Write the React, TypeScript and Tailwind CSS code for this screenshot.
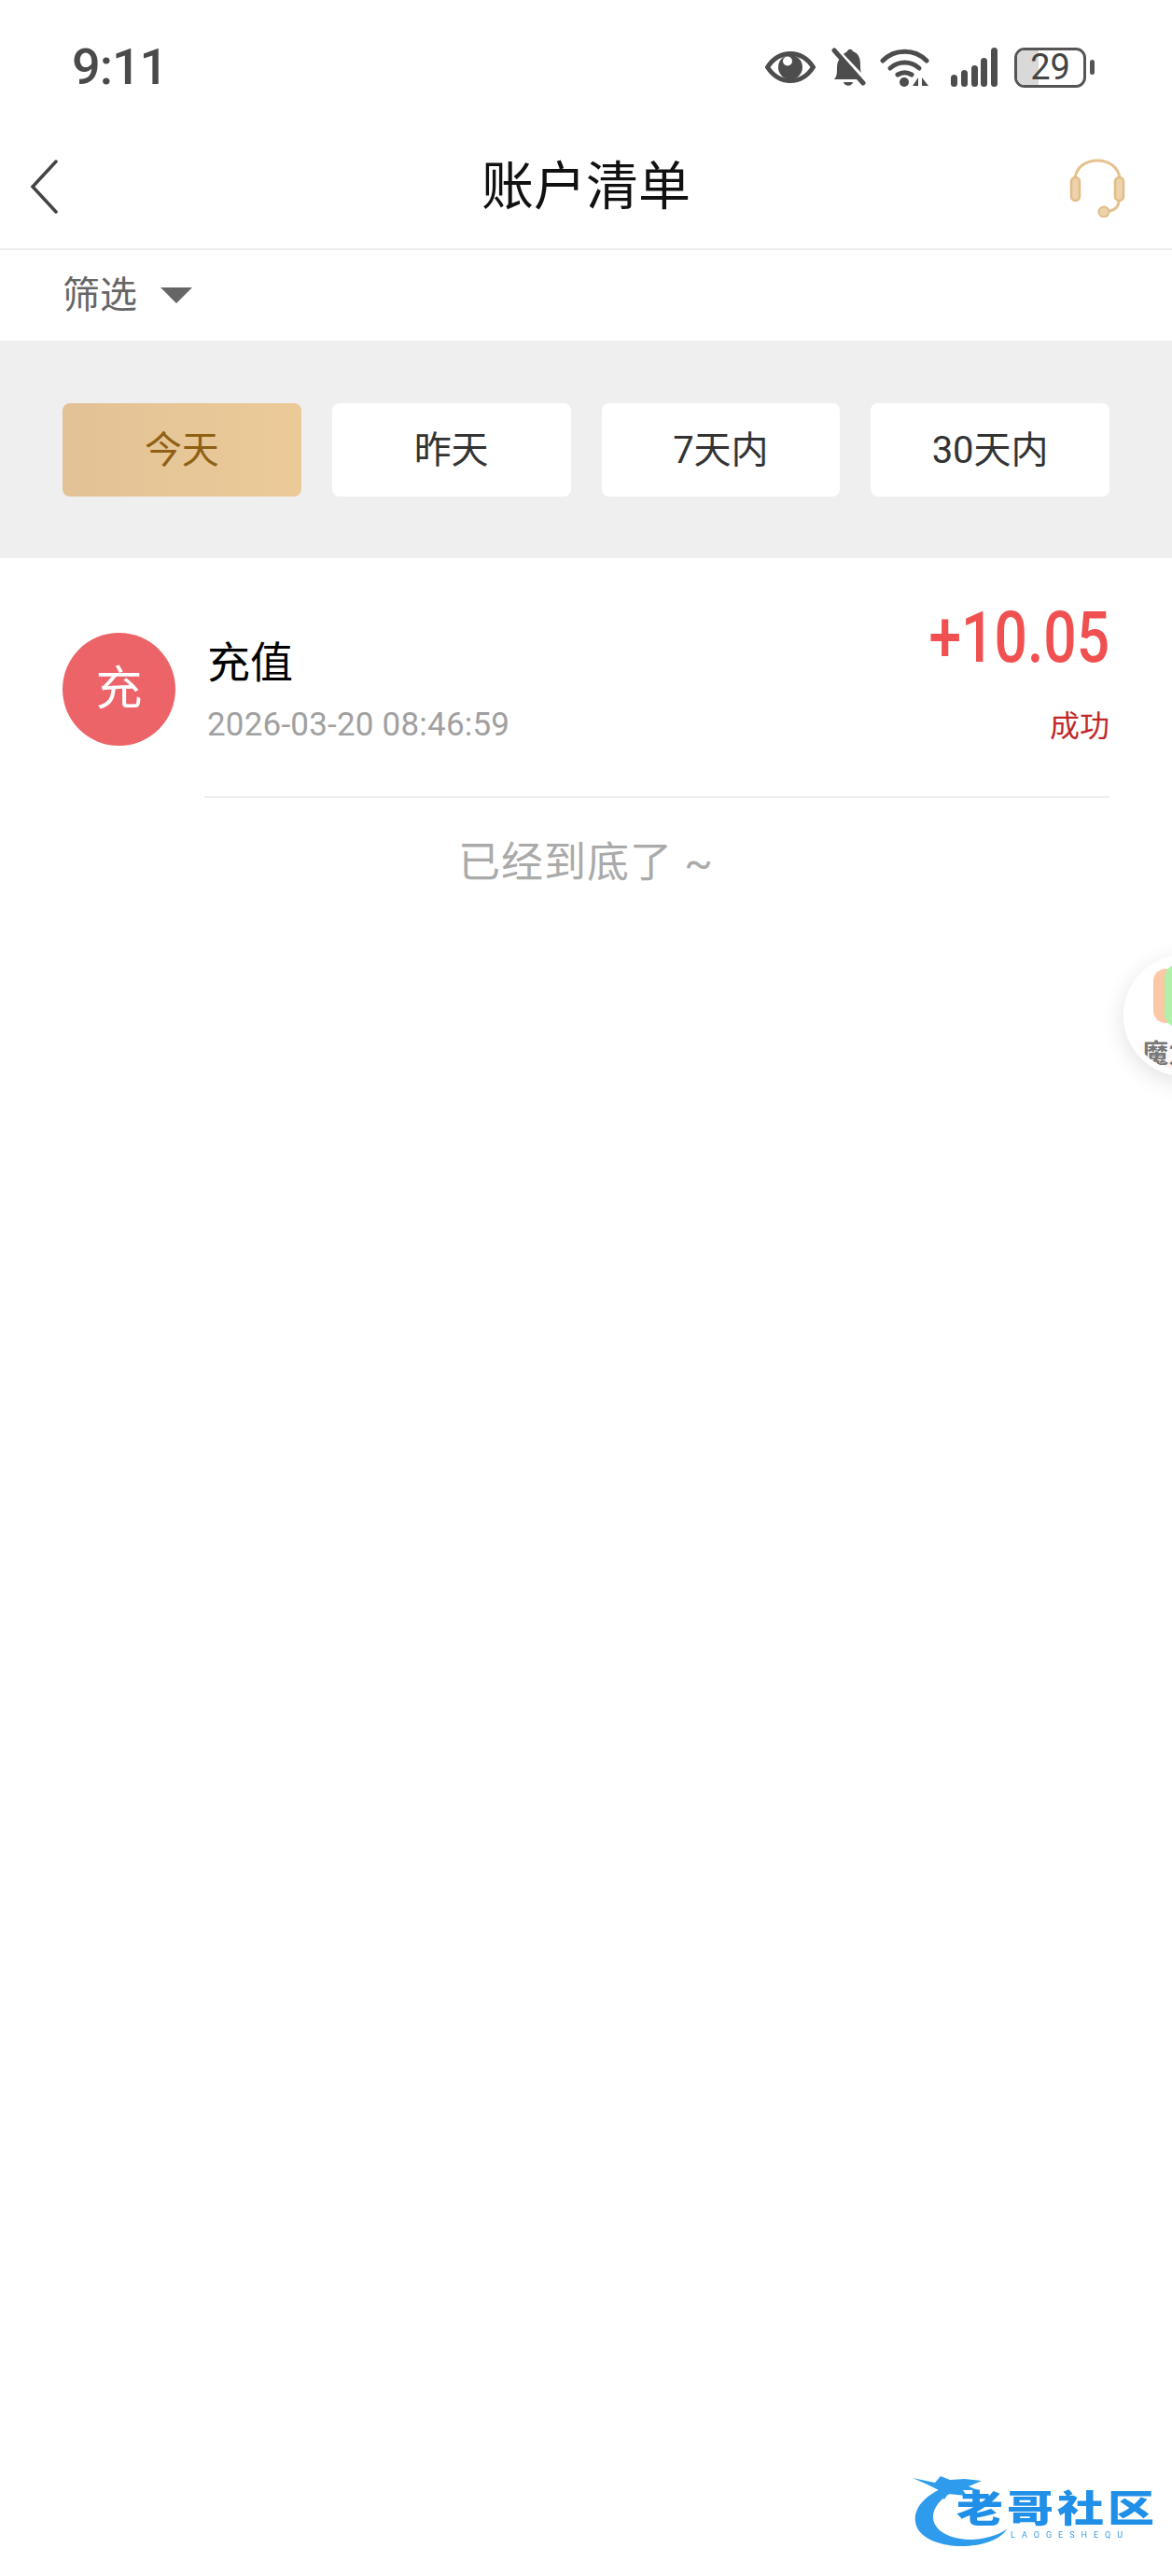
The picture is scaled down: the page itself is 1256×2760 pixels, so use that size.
import React from "react";

const ranges = [
  { name: "今天", active: true },
  { name: "昨天", active: false },
  { name: "7天内", active: false },
  { name: "30天内", active: false },
];

const fontCss = "font-['Roboto','Noto_Sans_CJK_SC',sans-serif]";

const StatusIcons: React.FC = () => {
  return (
    <div className="flex items-center text-[#4d4d4d]">
      {/* eye */}
      <svg width="54" height="34" viewBox="0 0 54 34" className="mr-[16px]">
        <path d="M2.5 17C9 7 17 2.5 27 2.5S45 7 51.5 17C45 27 37 31.5 27 31.5S9 27 2.5 17Z" fill="none" stroke="currentColor" strokeWidth="5" />
        <circle cx="27" cy="17" r="13" fill="currentColor" />
        <circle cx="24" cy="10.5" r="5" fill="#fff" />
      </svg>
      {/* muted bell */}
      <svg width="38" height="42" viewBox="0 0 38 42" className="mr-[15px]">
        <path d="M4 34c3-3 3-7 3-13 0-4 1-7 3-9l20 22Z" fill="currentColor" />
        <path d="M14 7c2-2 3-2 4-3 1-3 5-3 6 0 6 2 8 7 8 14 0 4 0 7 1 9Z" fill="currentColor" />
        <path d="M14 37h10c-1 5-9 5-10 0Z" fill="currentColor" />
        <path d="M4 3l31 35" stroke="currentColor" strokeWidth="5" strokeLinecap="round" />
      </svg>
      {/* wifi */}
      <svg width="53" height="42" viewBox="0 0 53 42" className="mr-[23px]">
        <path d="M3 14C16 1 37 1 50 14" fill="none" stroke="currentColor" strokeWidth="5" strokeLinecap="round" />
        <path d="M11 22c9-8 22-8 31 0" fill="none" stroke="currentColor" strokeWidth="5" strokeLinecap="round" />
        <path d="M19 29c5-3 10-3 15 0" fill="none" stroke="currentColor" strokeWidth="5" strokeLinecap="round" />
        <circle cx="26" cy="37" r="5" fill="currentColor" />
        <path d="M41 32v9h-6ZM45 32l7 9h-7Z" fill="currentColor" />
      </svg>
      {/* signal */}
      <svg width="50" height="42" viewBox="0 0 50 42" className="mr-[18px]">
        <rect x="0" y="29" width="7" height="13" rx="3.5" fill="currentColor" />
        <rect x="11" y="24" width="7" height="18" rx="3.5" fill="currentColor" />
        <rect x="22" y="19" width="7" height="23" rx="3.5" fill="currentColor" />
        <rect x="32" y="11" width="7" height="31" rx="3.5" fill="currentColor" />
        <rect x="43" y="0" width="7" height="42" rx="3.5" fill="currentColor" />
      </svg>
      {/* battery */}
      <div className="relative flex h-[43px] w-[77px] items-center justify-center overflow-hidden rounded-[11px] border-[3px] border-[#555]">
        <div className="absolute inset-y-0 left-0 w-[23px] bg-[#d9d9d9]" />
        <span className="relative text-[38px] leading-none text-[#444]">29</span>
      </div>
      <div className="ml-[4px] h-[16px] w-[5px] rounded-full bg-[#555]" />
    </div>
  );
};

const Headset: React.FC = () => {
  return (
    <svg width="60" height="66" viewBox="0 0 60 66" fill="none">
      <path d="M6 26C6 -2 54 -2 54 26" stroke="#e5c18e" strokeWidth="3" />
      <rect x="2" y="23" width="9" height="25" rx="4.5" fill="#ecd3ab" stroke="#e3bd88" strokeWidth="2.5" />
      <rect x="49" y="23" width="9" height="25" rx="4.5" fill="#ecd3ab" stroke="#e3bd88" strokeWidth="2.5" />
      <path d="M53 48c0 8-6 11-14 12" stroke="#e5c18e" strokeWidth="3" />
      <circle cx="37" cy="60" r="5.5" fill="#ecd3ab" stroke="#e3bd88" strokeWidth="2" />
    </svg>
  );
};

const App: React.FC = () => {
  return (
    <div className={`relative h-[2760px] w-full overflow-hidden bg-white ${fontCss}`}>
      {/* status bar */}
      <div className="flex h-[144px] items-center justify-between pl-[77px] pr-[83px]">
        <span className="text-[54px] font-medium leading-none tracking-[-1px] text-[#4a4a4a]">9:11</span>
        <StatusIcons />
      </div>

      {/* title */}
      <div className="grid h-[124px] grid-cols-[1fr_auto_1fr] items-start border-b-[2px] border-[#eeeeee]">
        <div className="pl-[32px] pt-[27px]">
          <svg width="30" height="58" viewBox="0 0 30 58" fill="none">
            <path d="M28 2L3 29l25 27" stroke="#444" strokeWidth="3.5" strokeLinecap="round" />
          </svg>
        </div>
        <h1 className="mt-[22px] text-[56px] font-normal leading-[68px] text-[#111]">账户清单</h1>
        <div className="flex justify-end pr-[50px] pt-[23px]">
          <Headset />
        </div>
      </div>

      {/* filter */}
      <div className="flex h-[97px] items-center pl-[67px]">
        <span className="text-[40px] leading-none text-[#666]">筛选</span>
        <div className="ml-[25px] h-0 w-0 border-x-[17px] border-t-[17px] border-x-transparent border-t-[#666]" />
      </div>

      <div className="grid h-[233px] grid-cols-4 items-center gap-[33px] bg-[#efefef] px-[67px]">
        {ranges.map((range) =>
          range.active ? (
            <button
              key={range.name}
              className="h-[100px] rounded-[8px] bg-gradient-to-r from-[#e2c296] to-[#ecca98] pt-[2px] text-[40px] text-[#8f6014]"
            >
              {range.name}
            </button>
          ) : (
            <button key={range.name} className="h-[100px] rounded-[8px] bg-white pt-[2px] text-[40px] text-[#333]">
              {range.name}
            </button>
          )
        )}
      </div>

      {/* record */}
      <div className="flex pl-[67px] pr-[67px] pt-[80px]">
        <div className="flex h-[121px] w-[121px] shrink-0 items-center justify-center rounded-full bg-[#ec6368] text-[50px] text-white">
          充
        </div>
        <div className="ml-[31px] flex h-[177px] flex-1 justify-between border-b-[2px] border-[#eeeeee] pl-[3px]">
          <div>
            <div className="mt-[2px] text-[46px] leading-[60px] text-black">充值</div>
            <div className="mt-[17px] text-[35px] leading-[40px] tracking-[0.2px] text-[#a0a0a0]">2026-03-20 08:46:59</div>
          </div>
          <div className="flex flex-col items-end">
            <div className="-mt-[40px] origin-right scale-x-[0.82] text-[76px] font-medium leading-[90px] text-[#f05050]">+10.05</div>
            <div className="mt-[30px] text-[32px] leading-[40px] text-[#c0282a]">成功</div>
          </div>
        </div>
      </div>

      <div className="mt-[44px] text-center text-[45px] leading-[52px] tracking-[1px] text-[#aaaaaa]">已经到底了 ~</div>

      {/* floating ball */}
      <div className="absolute left-[1204px] top-[1023px] h-[130px] w-[130px] overflow-hidden rounded-full border-[6px] border-white bg-gradient-to-b from-white from-70% to-[#fdf0f4] shadow-[0_6px_24px_rgba(0,0,0,0.12)]">
        <div className="absolute left-[26px] top-[9px] h-[58px] w-[26px] rounded-full bg-[#fbc7a4]" />
        <div className="absolute left-[43px] top-[1px] h-[76px] w-[30px] rounded-full bg-[#a9d4f7]" />
        <div className="absolute left-[38px] top-[4px] h-[68px] w-[30px] rounded-full bg-[#b0f0a8]" />
        <div className="absolute left-[14px] top-[87px] whitespace-nowrap text-[28px] font-bold leading-none text-[#777]">魔力</div>
      </div>

      {/* watermark */}
      <div className="absolute left-[976px] top-[2648px] h-[82px] w-[262px] blur-[0.6px]">
        <svg width="110" height="82" viewBox="0 0 110 82" className="absolute left-0 top-0">
          <path d="M40 15C16 25 3 38 5 54c2 16 24 26 50 26 20 0 40-6 48-18-14 9-34 13-50 10-18-3-30-12-29-25 1-10 10-20 24-27Z" fill="#2f9bec" />
          <path d="M2 7l24 5 6-7 10 4 16-1 18 2-14 6 10 4-16 0 4 6-20-2-4 6-6-10-12-6Z" fill="#2f9bec" />
        </svg>
        <div className="absolute left-[49px] top-[20px] origin-top scale-y-[0.8] whitespace-nowrap text-[50px] font-black leading-[50px] tracking-[4px] text-[#1f8fe8]">
          老哥社区
        </div>
        <div className="absolute left-[107px] top-[63px] whitespace-nowrap text-[9px] leading-[10px] tracking-[7px] text-[#3a9ae6]">
          LAOGESHEQU
        </div>
      </div>
    </div>
  );
};

export default App;
